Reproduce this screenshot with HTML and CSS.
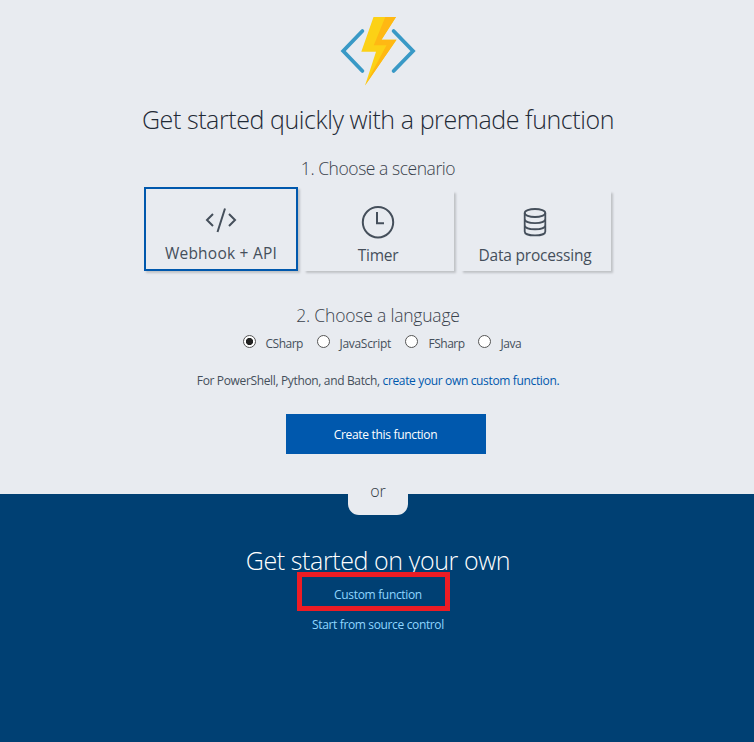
FILE: index.html
```html
<!DOCTYPE html>
<html lang="en">
<head>
<meta charset="utf-8">
<title>Get started</title>
<link rel="stylesheet" href="styles.css">
</head>
<body>
<main class="premade">
  <svg class="logo" width="76" height="72" viewBox="0 0 76 72">
    <g fill="none" stroke="#3999c6" stroke-width="3.8" stroke-linecap="round" stroke-linejoin="miter">
      <path d="M22.4 16 3.2 36 22.4 56"/>
      <path d="M53.6 16 73 36 53.6 56"/>
    </g>
    <path fill="#fcd116" d="M33.500 2H56L41.500 24.800H56.500L25 70.500 36 36.800H21.300Z"/>
    <path fill="#ffb813" d="M45.300 2H56L41.500 24.800H56.500L25 70.500 46.500 30.200H33.800Z"/>
  </svg>
  <h1 class="title">Get started quickly with a premade function</h1>
  <h2 class="step scenario-step">1. Choose a scenario</h2>
  <div class="cards">
    <button class="card selected">
      <svg width="34" height="34" viewBox="0 0 34 34" fill="none" stroke="#454f5b" stroke-width="2">
        <path d="M9 11 3 17 9 23M25 11l6 6-6 6M21 5.500 13.500 29"/>
      </svg>
      <span class="webhook-label">Webhook + API</span>
    </button>
    <button class="card">
      <svg width="34" height="34" viewBox="0 0 34 34" fill="none" stroke="#454f5b" stroke-width="2">
        <circle cx="17" cy="17.200" r="15.200"/>
        <path d="M16 7v11.300h7"/>
      </svg>
      <span class="timer-label">Timer</span>
    </button>
    <button class="card">
      <svg width="34" height="34" viewBox="0 0 34 34" fill="none" stroke="#454f5b" stroke-width="1.800">
        <ellipse cx="17" cy="8" rx="10.300" ry="4"/>
        <path d="M6.700 8v18.400c0 5.400 20.600 5.400 20.600 0V8M6.700 14c0 5.400 20.600 5.400 20.600 0M6.700 20.200c0 5.400 20.600 5.400 20.600 0"/>
      </svg>
      <span class="data-label">Data processing</span>
    </button>
  </div>
  <h2 class="step language-step">2. Choose a language</h2>
  <div class="languages">
    <label class="csharp"><input type="radio" name="lang" checked><span>CSharp</span></label>
    <label class="javascript"><input type="radio" name="lang"><span>JavaScript</span></label>
    <label class="fsharp"><input type="radio" name="lang"><span>FSharp</span></label>
    <label class="java"><input type="radio" name="lang"><span>Java</span></label>
  </div>
  <p class="note">For PowerShell, Python, and Batch, <a href="#">create your own custom function.</a></p>
  <button class="create">Create this function</button>
</main>
<section class="own">
  <div class="or">or</div>
  <h1 class="own-title">Get started on your own</h1>
  <div class="marked"><a class="custom" href="#">Custom function</a></div>
  <a class="source" href="#">Start from source control</a>
</section>
</body>
</html>
```

FILE: styles.css
```css
* { box-sizing: border-box; }
body {
  margin: 0;
  height: 742px;
  display: flex;
  flex-direction: column;
  font-family: "Open Sans", "Noto Sans", sans-serif;
  color: #454f5b;
  background: #e8ebf0;
  overflow: hidden;
}
h1, h2, p { margin: 0; font-weight: 300; white-space: nowrap; }
a { text-decoration: none; }
button { font-family: inherit; border: 0; padding: 0; }
.premade {
  height: 494px;
  display: flex;
  flex-direction: column;
  align-items: center;
  padding: 15px 0 0 2px;
}
.logo { flex: none; }
.title {
  margin-top: 14px;
  font-size: 25px;
  line-height: 36px;
  letter-spacing: -0.42px;
  color: #1f2a36;
}
.step { font-size: 17.5px; line-height: 24px; color: #3a424c; }
.scenario-step { margin-top: 19px; letter-spacing: -0.45px; }
.cards { display: flex; gap: 6px; margin-top: 7px; height: 85px; padding-right: 1px; }
.card {
  width: 150px;
  height: 80px;
  margin-top: 4px;
  padding: 14px 2px 0 0;
  background: #e8ebf0;
  color: #454f5b;
  box-shadow: 2px 2px 2px #bfc2c6;
  display: flex;
  flex-direction: column;
  align-items: center;
}
.card:last-child { margin-left: 1px; }
.card svg { flex: none; }
.card span { font-size: 15.5px; line-height: 24px; margin-top: 4px; white-space: nowrap; }
.webhook-label { letter-spacing: 0.23px; }
.timer-label { letter-spacing: -0.3px; }
.data-label { letter-spacing: -0.2px; }
.card.selected {
  width: 154px;
  height: 84px;
  margin-top: 0;
  padding-right: 0;
  border: 2px solid #0058ad;
}
.language-step { margin-top: 31px; letter-spacing: -0.2px; }
.languages {
  display: flex;
  width: 271px;
  height: 20px;
  margin-top: 5px;
  font-size: 12px;
  line-height: 20px;
  letter-spacing: -0.5px;
}
.languages label { display: flex; flex: none; white-space: nowrap; }
.languages input {
  appearance: none;
  flex: none;
  width: 13px;
  height: 13px;
  margin: 3px 10px 0 0;
  border: 1px solid #555;
  border-radius: 50%;
  background: #fff;
}
.languages input:checked { background: radial-gradient(circle, #222 3.2px, #fff 4px); }
.csharp { width: 74px; }
.javascript { width: 88px; letter-spacing: -0.3px; }
.fsharp { width: 73px; }
.languages .fsharp input { margin-right: 11px; }
.languages span { margin-top: 2px; }
.note { margin-top: 18px; font-size: 12px; line-height: 22px; font-weight: 400; letter-spacing: -0.35px; }
.note a { color: #0058ad; }
.create {
  flex: none;
  width: 200px;
  height: 40px;
  margin: 22px 0 0 16px;
  padding: 1px 1px 0 0;
  background: #0058ad;
  color: #fff;
  font-size: 12px;
  letter-spacing: -0.32px;
}
.own {
  height: 248px;
  background: #004073;
  display: flex;
  flex-direction: column;
  align-items: center;
  padding-left: 2px;
}
.or {
  flex: none;
  width: 60px;
  height: 31px;
  margin-top: -10px;
  border-radius: 0 0 11px 11px;
  background: #e8ebf0;
  line-height: 15px;
  font-size: 16px;
  font-weight: 300;
  letter-spacing: 0;
  color: #303842;
  text-align: center;
}
.own-title {
  margin-top: 27px;
  font-size: 25px;
  line-height: 36px;
  letter-spacing: -0.4px;
  color: #fff;
}
.marked {
  flex: none;
  width: 153px;
  height: 39px;
  margin: -6px 9px 0 0;
  border: 5px solid #ed1c24;
  background: #004073;
  padding-left: 9px;
  text-align: center;
  line-height: 36px;
  font-size: 12px;
  letter-spacing: -0.33px;
}
.own a { color: #8fd6ff; white-space: nowrap; }
.source { margin-top: 4px; font-size: 12px; line-height: 20px; letter-spacing: -0.36px; }
```
